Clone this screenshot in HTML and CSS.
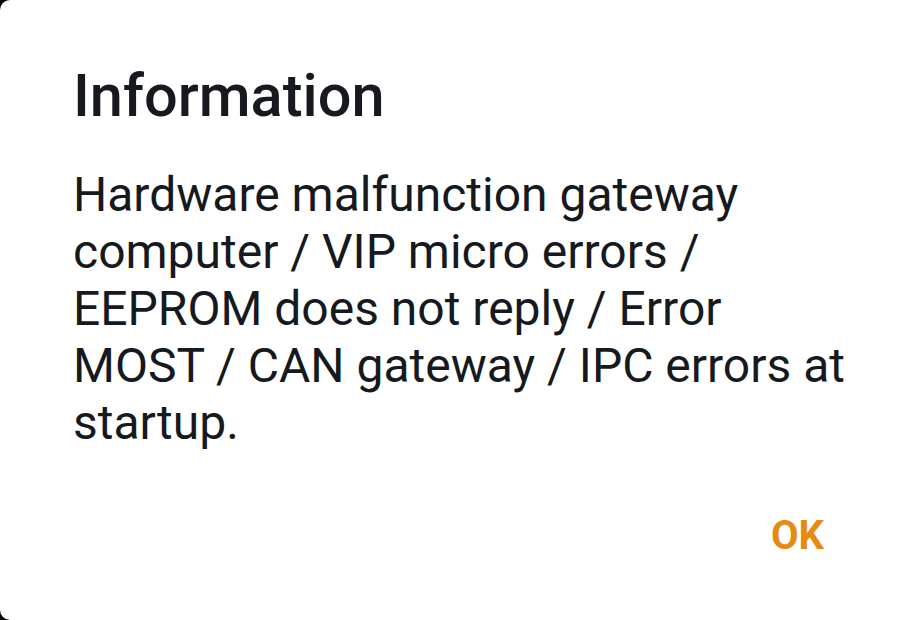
FILE: index.html
```html
<!DOCTYPE html>
<html lang="en">
  <head>
    <meta charset="UTF-8" />
    <meta name="viewport" content="width=device-width, initial-scale=1.0" />
    <title>Information</title>
    <link rel="stylesheet" href="styles.css">
  </head>
  <body>
    <section class="dialog">
      <h1 class="titel">Information</h1>
      <p class="besked">
        Hardware malfunction gateway computer / VIP micro errors / EEPROM does
        not reply / Error MOST / CAN gateway / IPC errors at startup.
      </p>
      <div class="knapper">
        <button class="ok">OK</button>
      </div>
    </section>
  </body>
</html>
```

FILE: styles.css
```css
* {
  margin: 0;
  padding: 0;
  box-sizing: border-box;
  font-family: Roboto, "Noto Sans", sans-serif;
  --tekst: #16191e;
  --orange: #e68a12;
}

body {
  background-color: #000;
  width: 924px;
  height: 620px;
  overflow: hidden;
}

.dialog {
  background-color: #fff;
  height: 620px;
  border-radius: 10px 0 0 10px;
  padding: 61px 72px 0 73px;
}

.titel {
  font-size: 59.5px;
  font-weight: 500;
  line-height: 70px;
  color: var(--tekst);
}

.besked {
  margin-top: 35px;
  font-size: 48px;
  line-height: 57px;
  color: var(--tekst);
}

.knapper {
  display: flex;
  justify-content: flex-end;
  margin-top: 61px;
  padding-right: 28px;
}

.ok {
  background: none;
  border: none;
  font-size: 40px;
  font-weight: 700;
  line-height: 48px;
  color: var(--orange);
}
```
